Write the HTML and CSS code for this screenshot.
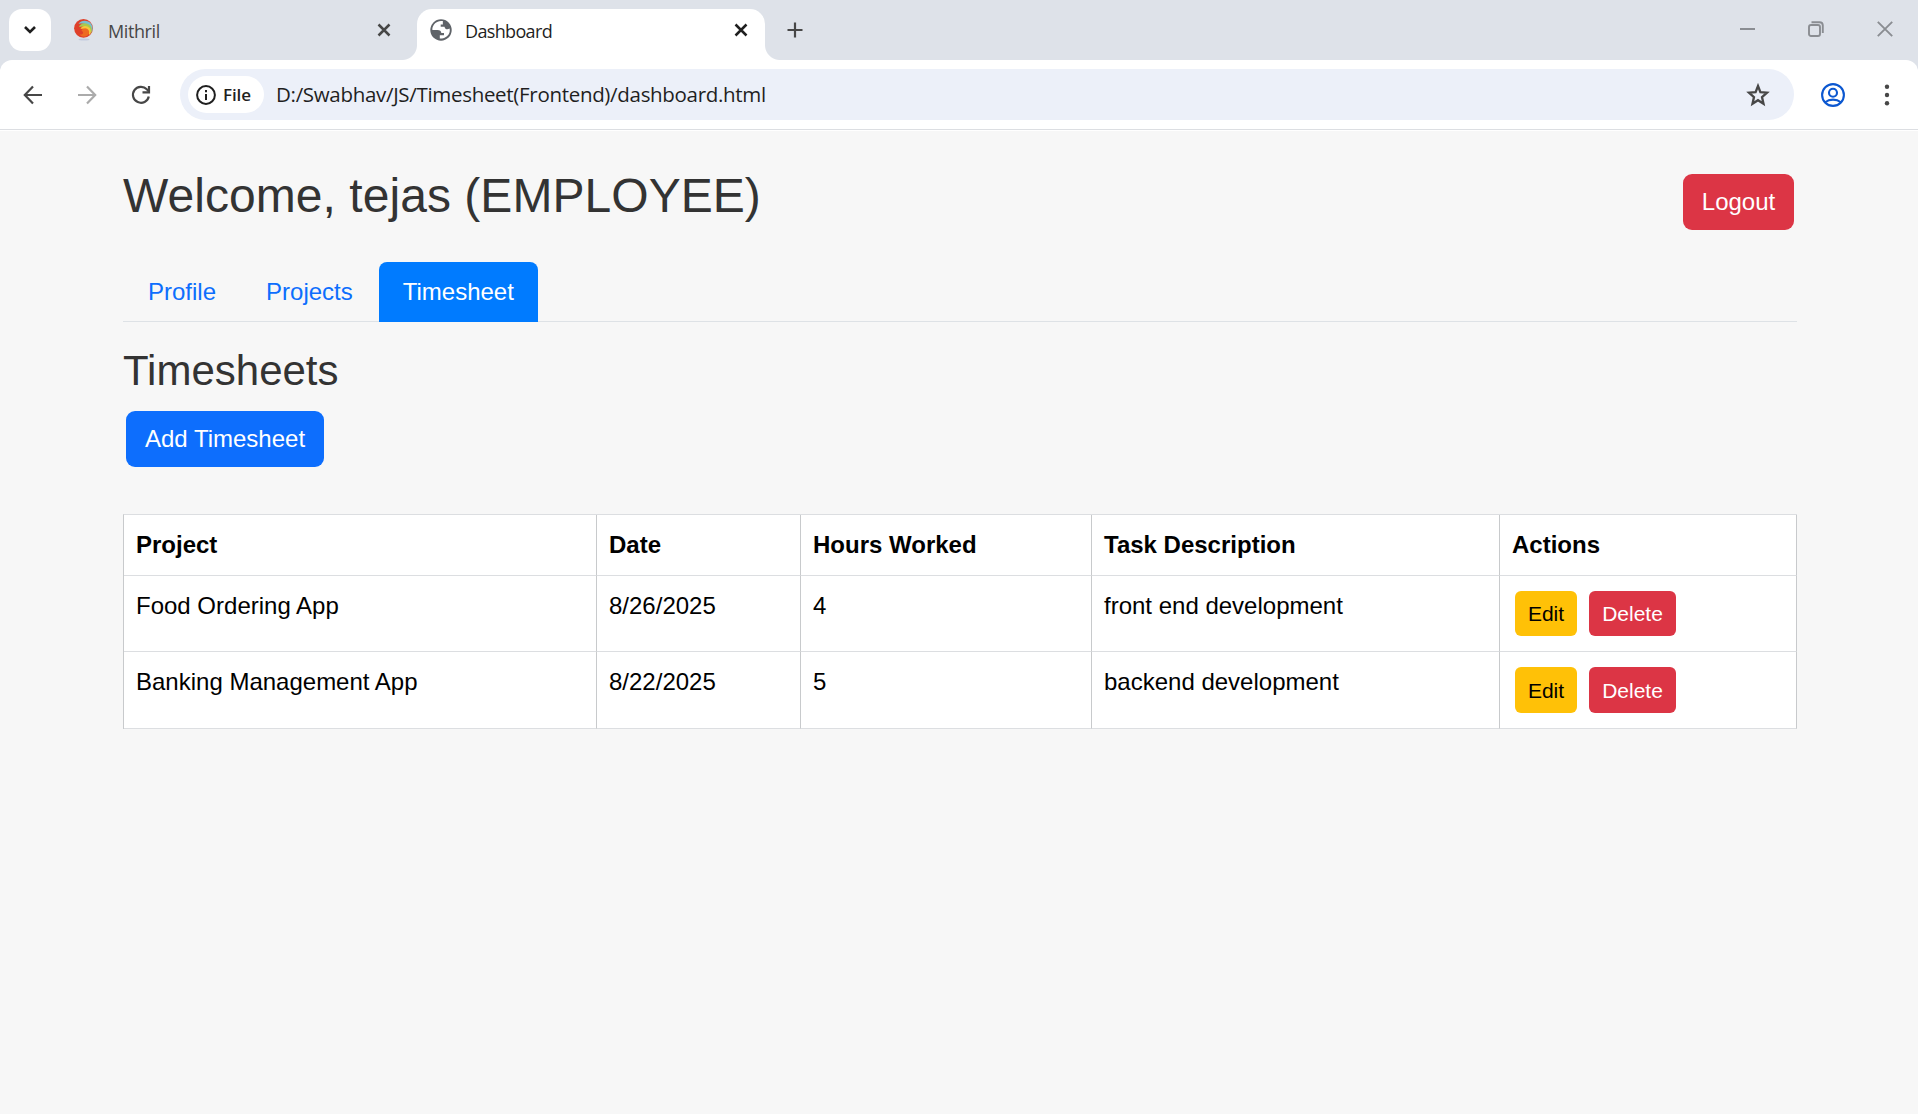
FILE: index.html
```html
<!DOCTYPE html>
<html lang="en">
<head>
<meta charset="utf-8">
<title>Dashboard</title>
<link rel="stylesheet" href="styles.css">
</head>
<body>
<header class="browser">
  <div class="tabstrip">
    <button class="tab-search" aria-label="Search tabs"><svg width="14" height="10" viewBox="0 0 14 10"><path d="M2 2l5 5 5-5" fill="none" stroke="#1f1f1f" stroke-width="2.6"/></svg></button>
    <div class="tab tab-idle">
      <svg class="favicon mithril" width="22" height="24" viewBox="0 0 22 24">
        <ellipse cx="11" cy="21.500" rx="5.500" ry="1" fill="#c3cbe0"/>
        <circle cx="10.500" cy="10.300" r="9.400" fill="#df402a"/>
        <path d="M5.500 6C8 1.800 15 1.800 18.300 6C20 9 20 12 18.500 14.500C19 9 13 4 5.500 6Z" fill="#79bfd0"/>
        <path d="M6 9C7.500 4.500 14 4 17.500 8C19.500 11 19 14 17.500 16C17.500 11 13 7 6 9Z" fill="#a9c94e"/>
        <path d="M7.500 11C8.500 7.300 14 6.800 16.700 10C18.500 13 17.800 15.500 16 17C16 13 13 9.500 7.500 11Z" fill="#f6c93a"/>
        <path d="M8.500 12.500C10 9.500 14 9.500 15.800 12.500C16.800 15 15.500 17.500 12.500 18.500C10 19 7.500 18 6.500 16.500C10 17 11.500 14.500 8.500 12.500Z" fill="#ee6a22"/>
      </svg>
      <span class="tab-title idle-title">Mithril</span>
      <svg class="close" width="14" height="14" viewBox="0 0 14 14"><path d="M1.500 1.500l11 11M12.500 1.500l-11 11" stroke="#474747" stroke-width="2.5"/></svg>
    </div>
    <div class="tab tab-active">
      <svg class="favicon" width="22" height="22" viewBox="0 0 22 22">
        <circle cx="11" cy="11" r="10.700" fill="#5f6368"/>
        <path d="M13 2.300C10 1.500 6 2.800 4 5.600C2.700 7.500 2.200 9.300 2.400 11H7.500C9.800 11 11.300 12.200 11.300 14H14V16.300H9.800V19.500C13.500 19.900 18 17.600 19.300 14C19.900 12.500 19.900 11 19.600 9.500C18.500 10.300 17.300 10.400 16.500 10.200C14.800 10 14.800 8.200 14.500 7.800H10.700V5.600H12.900C12.800 4.300 12.700 3.300 13 2.300Z" fill="#fff"/>
      </svg>
      <span class="tab-title active-title">Dashboard</span>
      <svg class="close" width="14" height="14" viewBox="0 0 14 14"><path d="M1.500 1.500l11 11M12.500 1.500l-11 11" stroke="#1f1f1f" stroke-width="2.5"/></svg>
    </div>
    <svg class="new-tab" width="16" height="16" viewBox="0 0 16 16"><path d="M8 .5v15M.5 8h15" stroke="#474747" stroke-width="2.2"/></svg>
    <div class="window-controls">
      <svg width="15" height="16" viewBox="0 0 15 16"><path d="M0 8h15" stroke="#8a8d92" stroke-width="2"/></svg>
      <svg width="16" height="16" viewBox="0 0 16 16"><g fill="none" stroke="#8a8d92" stroke-width="1.900"><rect x="1" y="4" width="11" height="11" rx="2"/><path d="M3.500 1.200H11.500Q14.800 1.200 14.800 4.500V12"/></g></svg>
      <svg width="16" height="16" viewBox="0 0 16 16"><path d="M.8.8l14.400 14.400M15.200.8L.8 15.200" stroke="#8a8d92" stroke-width="1.900"/></svg>
    </div>
  </div>
  <div class="toolbar">
    <svg class="nav-icon" width="20" height="20" viewBox="0 0 20 20"><path d="M19 10H2M10 1.500L1.800 10L10 18.500" fill="none" stroke="#474747" stroke-width="2.200"/></svg>
    <svg class="nav-icon" width="20" height="20" viewBox="0 0 20 20"><path d="M1 10H18M10 1.500L18.200 10L10 18.500" fill="none" stroke="#ababab" stroke-width="2.200"/></svg>
    <svg class="nav-icon" width="20" height="20" viewBox="0 0 20 20"><path d="M17.800 11.500A8 8 0 1 1 15.800 4.300L18 6.500" fill="none" stroke="#474747" stroke-width="2.200"/><path d="M18 1V7.300H11.500" fill="none" stroke="#474747" stroke-width="2.200"/></svg>
    <div class="omnibox">
      <div class="file-chip">
        <svg width="20" height="20" viewBox="0 0 20 20"><circle cx="10" cy="10" r="8.900" fill="none" stroke="#1f1f1f" stroke-width="2"/><path d="M10 9v6M10 5v2.200" stroke="#1f1f1f" stroke-width="2"/></svg>
        <span class="file-label">File</span>
      </div>
      <span class="url">D:/Swabhav/JS/Timesheet(Frontend)/dashboard.html</span>
      <svg class="star" width="24" height="24" viewBox="0 0 24 24"><path d="M12 3L14.400 9.200L21 9.700L16 14.100L17.500 20.700L12 17.200L6.500 20.700L8 14.100L3 9.700L9.600 9.200Z" fill="none" stroke="#474747" stroke-width="2.300"/></svg>
    </div>
    <svg class="avatar" width="24" height="24" viewBox="0 0 24 24"><g fill="none" stroke="#0b57d0" stroke-width="2.100"><circle cx="12" cy="12" r="10.900"/><circle cx="12" cy="9.800" r="4"/><path d="M4.200 19.300C8.500 15.700 15.500 15.700 19.800 19.300"/></g></svg>
    <svg class="menu" width="6" height="22" viewBox="0 0 6 22"><g fill="#474747"><circle cx="3" cy="2.700" r="2.200"/><circle cx="3" cy="11" r="2.200"/><circle cx="3" cy="19.300" r="2.200"/></g></svg>
  </div>
</header>
<main class="page">
  <div class="page-head">
    <h1 class="welcome">Welcome, tejas (EMPLOYEE)</h1>
    <button class="btn btn-danger">Logout</button>
  </div>
  <nav class="nav-tabs">
    <a class="nav-link">Profile</a>
    <a class="nav-link">Projects</a>
    <a class="nav-link active">Timesheet</a>
  </nav>
  <h2 class="section-title">Timesheets</h2>
  <button class="btn btn-primary">Add Timesheet</button>
  <table class="timesheets">
    <colgroup><col class="c-project"><col class="c-date"><col class="c-hours"><col class="c-task"><col class="c-actions"></colgroup>
    <thead>
      <tr><th>Project</th><th>Date</th><th>Hours Worked</th><th>Task Description</th><th>Actions</th></tr>
    </thead>
    <tbody>
      <tr><td>Food Ordering App</td><td>8/26/2025</td><td>4</td><td>front end development</td><td><div class="actions"><button class="btn-sm btn-warning">Edit</button><button class="btn-sm btn-danger">Delete</button></div></td></tr>
      <tr><td>Banking Management App</td><td>8/22/2025</td><td>5</td><td>backend development</td><td><div class="actions"><button class="btn-sm btn-warning">Edit</button><button class="btn-sm btn-danger">Delete</button></div></td></tr>
    </tbody>
  </table>
</main>
</body>
</html>
```
FILE: styles.css
```css
* { box-sizing: border-box; }
body {
  margin: 0;
  min-height: 1114px;
  background: #f7f7f7;
  font-family: "Liberation Sans", Arial, sans-serif;
  font-size: 24px;
  line-height: 36px;
  color: #000;
}
svg { display: block; flex: none; }
button { border: 0; font-family: inherit; }

.browser { font-family: "Open Sans", "Noto Sans", sans-serif; background: #dee2e9; }
.tabstrip { display: flex; height: 60px; padding: 9px 25px 0 9px; }
.tab-search {
  display: flex; align-items: center; justify-content: center;
  width: 42px; height: 42px; padding: 0; background: #fff; border-radius: 13px;
}
.tab { display: flex; position: relative; height: 51px; }
.tab-idle { width: 366px; padding: 0 26px 0 22px; }
.tab-active { width: 348px; padding: 0 17px 0 13px; background: #fff; border-radius: 15px 15px 0 0; }
.tab-active::before, .tab-active::after {
  content: ""; position: absolute; bottom: 0; width: 15px; height: 15px;
}
.tab-active::before { left: -15px; background: radial-gradient(circle at 0 0, transparent 14.5px, #fff 15.5px); }
.tab-active::after { right: -15px; background: radial-gradient(circle at 100% 0, transparent 14.5px, #fff 15.5px); }
.favicon { margin-top: 10px; }
.mithril { margin-top: 9px; }
.tab-title { margin-left: 13px; font-size: 18px; line-height: 45px; white-space: nowrap; }
.idle-title { color: #474747; letter-spacing: -0.4px; }
.active-title { color: #1f1f1f; letter-spacing: -0.65px; }
.close { margin: 14px 0 0 auto; }
.new-tab { margin: 13px 0 0 22px; }
.window-controls { display: flex; gap: 53px; margin: 12px 0 0 auto; }

.toolbar {
  display: flex; align-items: center; height: 70px; padding: 0 28px 0 23px;
  background: #fff; border-radius: 12px 12px 0 0; border-bottom: 1px solid #dcdee2;
  box-shadow: 0 1px #fff;
}
.nav-icon { margin-right: 34px; }
.omnibox {
  display: flex; align-items: center; width: 1614px; height: 51px; margin-left: -5px;
  padding: 0 24px 0 8px; background: #ecf0f9; border-radius: 26px;
}
.file-chip { display: flex; align-items: center; width: 76px; height: 37px; padding-left: 8px; background: #fff; border-radius: 19px; }
.file-label { margin-left: 7px; font-size: 17px; font-weight: 600; color: #1f1f1f; letter-spacing: -0.1px; }
.url { margin: -1px 0 0 12px; font-size: 20.5px; letter-spacing: -0.31px; color: #1f1f1f; white-space: nowrap; }
.star { margin-left: auto; }
.avatar { margin-left: 27px; }
.menu { margin-left: auto; }

.page { width: 1674px; margin: 0 auto 0 123px; }
.page-head { display: flex; justify-content: space-between; padding: 36px 3px 0 0; height: 132px; }
.welcome { margin: 1px 0 0; font-size: 48px; line-height: 58px; font-weight: 400; letter-spacing: 0.05px; color: #333; }
.btn { height: 56px; padding: 0 19px; font-size: 24px; line-height: 36px; color: #fff; border-radius: 9px; }
.page-head .btn { width: 111px; margin-top: 8px; padding: 0; }
.btn-danger { background: #dc3545; color: #fff; }
.btn-primary { display: block; width: 198px; margin-left: 3px; padding: 0; background: #0d6efd; }
.btn-warning { background: #ffc107; color: #000; }
.nav-tabs { display: flex; height: 60px; box-shadow: inset 0 -1px #dee2e6; }
.nav-link { height: 60px; padding: 12px 25px; color: #0d6efd; }
.nav-link.active { width: 159px; margin-left: 1px; padding: 12px 24px; background: #007bff; color: #fff; border-radius: 8px 8px 0 0; }
.section-title { margin: 24px 0 15px; font-size: 42px; line-height: 50px; font-weight: 400; color: #333; }

.timesheets {
  width: 1674px; margin-top: 47px; table-layout: fixed; border-collapse: separate; border-spacing: 0;
  background: #fff; border-left: 1px solid #c8cacc; border-top: 1px solid #dcdee1;
}
.c-project { width: 473px; }
.c-date { width: 204px; }
.c-hours { width: 291px; }
.c-task { width: 408px; }
.c-actions { width: 297px; }
th, td {
  padding: 12px 0 12px 12px; text-align: left; vertical-align: top;
  border-right: 1px solid #c8cacc; border-bottom: 1px solid #dcdee1;
}
th { height: 61px; font-weight: 700; }
td { height: 76px; }
tbody tr:last-child td { height: 77px; }
.actions { display: flex; gap: 12px; padding: 3px 0 0 3px; }
.btn-sm { width: 62px; height: 45px; padding: 0; font-size: 21px; line-height: 31px; border-radius: 6px; }
.btn-sm.btn-danger { width: 87px; }
tbody tr:last-child .btn-sm { height: 46px; }
```
